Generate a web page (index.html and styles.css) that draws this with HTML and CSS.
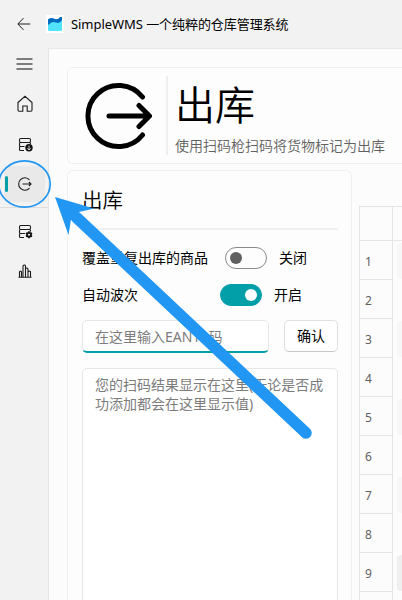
FILE: index.html
```html
<!DOCTYPE html>
<html lang="zh-CN">
<head>
<meta charset="utf-8">
<title>SimpleWMS</title>
<link rel="stylesheet" href="styles.css">
</head>
<body>
<header class="titlebar">
  <svg class="back" width="14" height="14" viewBox="0 0 14 14"><path d="M13.200 7H1M6.500 1.200L.8 7l5.700 5.800"/></svg>
  <span class="logo"><svg width="18" height="18" viewBox="0 0 18 18"><path fill="#50e3fb" d="M2 4h14v10.500q0 1.500-1.500 1.500h-11Q2 16 2 14.500z"/><path fill="#0669bd" d="M2 4.500Q5 2 9 4q3 1 5-2h2v3q-2 4-6 2.500Q6 6 4 8.500 3 10 2 9.500z"/></svg></span>
  <span class="title">SimpleWMS 一个纯粹的仓库管理系统</span>
</header>
<div class="app">
  <nav class="side">
    <svg class="menu" width="18" height="12" viewBox="0 0 18 12"><path d="M.5 1h16M.5 6h16M.5 11h16"/></svg>
    <a class="item"><svg width="18" height="18" viewBox="0 0 18 18"><path d="M2 7.500 9 1.300l7 6.200V15q0 1.200-1.200 1.200H11.200V11H6.800v5.200H3.200Q2 16.200 2 15z"/></svg></a>
    <a class="item"><svg width="18" height="18" viewBox="0 0 18 18"><rect x="3.500" y="3.500" width="11" height="4" rx="1.200"/><path d="M8.500 11.500h-4q-1 0-1-1v-2q0-1 1-1h9q1 0 1 1v1M8 15.500H4.500q-1 0-1-1v-2q0-1 1-1"/><circle class="solid" cx="13" cy="12.800" r="3.700"/><path class="knock" d="M13 10.600v4.200M11.300 13.300l1.700 1.700 1.700-1.700"/></svg></a>
    <a class="item active"><svg width="18" height="18" viewBox="0 0 18 18"><path d="M13.500 4.900A6.200 6.200 0 1 0 13.500 13.100M6.500 9H15M13 7 15 9l-2 2"/></svg></a>
    <i class="divider"></i>
    <a class="item"><svg width="18" height="18" viewBox="0 0 18 18"><rect x="3.500" y="3.500" width="11" height="4" rx="1.200"/><path d="M9 11.500H4.500q-1 0-1-1v-2q0-1 1-1h9q1 0 1 1v1M8 15.500H4.500q-1 0-1-1v-2q0-1 1-1"/><circle class="solid" cx="13" cy="12.800" r="2.800"/><path class="cog" d="M13 9.300v7M10 11l6 3.600M16 11l-6 3.600"/><circle class="hole" cx="13" cy="12.800" r="1"/></svg></a>
    <a class="item"><svg width="18" height="18" viewBox="0 0 18 18"><path d="M3.500 15V10q0-1 1-1t1 1v5M7 15V4q0-1 1.200-1T9.500 4v11M9.500 7q0-1 1-1t1.500 1v8M12.500 10q0-1 1-1t1 1v5M2.500 15.200h13"/></svg></a>
  </nav>
  <main class="page">
    <section class="card hero">
      <svg class="hero-icon" width="68" height="68" viewBox="0 0 68 68"><path d="M57.500 15A30.600 30.600 0 1 0 57.500 53M24 34h40M54 23.500 64.500 34 54 44.500"/></svg>
      <div class="hero-text"><h1>出库</h1><p>使用扫码枪扫码将货物标记为出库</p></div>
    </section>
    <div class="columns">
      <section class="card form">
        <h2>出库</h2>
        <div class="row first"><span class="label long">覆盖重复出库的商品</span><i class="switch"></i><span>关闭</span></div>
        <div class="row"><span class="label">自动波次</span><i class="switch on"></i><span>开启</span></div>
        <div class="entry"><div class="input">在这里输入EAN13码</div><div class="button">确认</div></div>
        <div class="result">您的扫码结果显示在这里(无论是否成<br>功添加都会在这里显示值)</div>
      </section>
      <div class="table">
        <div class="tr head"><span></span><b></b></div>
        <div class="tr"><span>1</span><b class="chip"></b></div>
        <div class="tr"><span>2</span><b></b></div>
        <div class="tr"><span>3</span><b class="chip"></b></div>
        <div class="tr"><span>4</span><b></b></div>
        <div class="tr"><span>5</span><b class="chip"></b></div>
        <div class="tr"><span>6</span><b></b></div>
        <div class="tr"><span>7</span><b class="chip"></b></div>
        <div class="tr"><span>8</span><b></b></div>
        <div class="tr"><span>9</span><b class="chip dark"></b></div>
        <div class="tr last"><span></span><b></b></div>
      </div>
    </div>
  </main>
</div>
<svg class="annotation" width="402" height="600" viewBox="0 0 402 600"><ellipse cx="24.500" cy="184" rx="25.700" ry="23.200"/><path class="shaft" d="M76 217 306 433"/><path class="tip" d="M55 197 94 208.500 79 212 71 219.500 68.500 235z"/></svg>
</body>
</html>
```
FILE: styles.css
```css
* { box-sizing: border-box; }
body { margin: 0; width: 402px; height: 600px; overflow: hidden; background: #f2f2f2; color: #000; font: 14px/20px "Noto Sans", "Noto Sans CJK SC", sans-serif; position: relative; }
svg { display: block; fill: none; stroke: #1c1c1c; stroke-width: 1.1; flex: none; }
h1, h2, p { margin: 0; font-weight: 350; }
.titlebar { height: 48px; display: flex; align-items: center; padding-left: 17px; white-space: nowrap; }
.back { stroke-width: 1; }
.logo { width: 18px; height: 18px; background: #fff; margin: 0 7px 0 15px; }
.logo svg { stroke: none; }
.title { font-size: 13px; letter-spacing: -.06px; }
.app { display: flex; height: 552px; }
.side { width: 48px; display: flex; flex-direction: column; flex: none; }
.menu { margin: 10px 0 7px 16px; stroke: #7c7c7c; stroke-width: 2; }
.item { height: 36px; margin: 9px 3px 0 4px; border-radius: 4px; display: flex; align-items: center; padding-left: 12px; position: relative; }
.item + .item { margin-top: 4px; }
.active { background: #e9e9e9; }
.active::before { content: ""; position: absolute; left: 1px; top: 10px; width: 3px; height: 16px; border-radius: 2px; background: #039fa9; }
.divider { height: 1px; background: #dedede; margin-top: 5px; }
.divider + .item { margin-top: 5px; }
.solid { fill: #111; stroke: none; }
.knock { stroke: #fff; stroke-width: .8; }
.cog { stroke: #111; stroke-width: 1.8; }
.hole { fill: #fff; stroke: none; }
.page { flex: 1; min-width: 0; overflow: hidden; background: #fcfcfc; border-left: 1px solid #e5e5e5; border-top: 1px solid #e8e8e8; padding: 18px 0 0 18px; }
.card { background: #fdfdfd; border: 1px solid #f0f0f0; border-radius: 6px; }
.hero { height: 97px; display: flex; border-right: 0; border-radius: 6px 0 0 6px; }
.hero-icon { stroke: #000; stroke-width: 5; stroke-linecap: round; stroke-linejoin: round; margin: 14px 13px 0 17px; }
.hero-text { margin-top: 8px; height: 79px; border-left: 2px solid #efefef; padding-left: 7px; white-space: nowrap; }
h1 { font-size: 40px; line-height: 58px; }
p { color: #616161; line-height: 20px; margin-top: 2px; }
.columns { display: flex; margin-top: 6px; }
.form { width: 285px; height: 430px; border-bottom: 0; border-radius: 6px 6px 0 0; padding: 0 13px; flex: none; }
h2 { font-size: 20.5px; line-height: 28px; height: 59px; padding: 15px 0 0 1px; border-bottom: 2px solid #f0f0f0; }
.row { height: 37px; display: flex; align-items: center; padding-left: 1px; white-space: nowrap; }
.first { margin-top: 9px; }
.label { width: 138px; }
.label.long { width: 143px; }
.switch { width: 42px; height: 22px; border: 1px solid #8a8a8a; border-radius: 11px; margin-right: 12px; padding: 4px; display: flex; }
.switch::before { content: ""; width: 12px; height: 12px; border-radius: 50%; background: #606060; }
.switch.on { background: #039fa9; border-color: #039fa9; justify-content: flex-end; }
.switch.on::before { background: #fff; }
.entry { display: flex; gap: 15px; margin: 7px 0 0 1px; }
.input { width: 187px; height: 33px; border: 1px solid #e7e7e7; border-bottom: 2px solid #039fa9; border-radius: 5px; background: #fff; color: #7c7c7c; padding: 6px 12px; white-space: nowrap; }
.button { width: 54px; height: 32px; border: 1px solid #dfdfdf; border-bottom-color: #c8c8c8; border-radius: 5px; background: #fff; text-align: center; line-height: 30px; }
.result { height: 232px; margin: 15px 0 0 1px; width: 256px; border: 1px solid #e7e7e7; border-bottom: 0; border-radius: 5px 5px 0 0; background: #fff; color: #7c7c7c; padding: 6px 12px; line-height: 19px; white-space: nowrap; }
.table { margin: 36px 0 0 7px; flex: 1; border-left: 1px solid #e5e5e5; border-top: 1px solid #e5e5e5; }
.tr { display: flex; height: 39px; }
.head { height: 34px; }
.tr span { width: 33px; border-right: 1px solid #e5e5e5; border-bottom: 1px solid #e5e5e5; padding: 11px 0 0 5px; font-size: 12px; color: #606060; }
.tr b { flex: 1; }
.head b { border-bottom: 1px solid #e9e9e9; }
.tr .chip { margin: 2px 0 1px 4px; background: #f7f7f7; border-radius: 4px 0 0 4px; }
.tr .dark { background: #efefef; }
.last { height: 8px; }
.last span { border-bottom: 0; padding: 0; }
.annotation { position: absolute; left: 0; top: 0; stroke: #2196f3; stroke-width: 1.7; }
.shaft { stroke-width: 11.5; stroke-linecap: round; }
.tip { fill: #2196f3; stroke: none; }
```
